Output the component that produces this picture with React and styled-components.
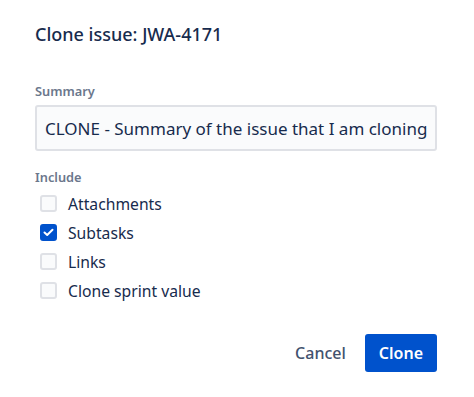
import React, { useState } from "react";
import styled, { createGlobalStyle } from "styled-components";

const GlobalStyle = createGlobalStyle`
  html, body {
    margin: 0;
    padding: 0;
    background: #ffffff;
  }
  body {
    font-family: "Noto Sans", "Open Sans", sans-serif;
    color: #172b4d;
  }
`;

const Dialog = styled.div`
  width: 474px;
  height: 397px;
  box-sizing: border-box;
  padding: 16px 37px 0 35px;
  display: flex;
  flex-direction: column;
`;

const Title = styled.h1`
  margin: 0;
  height: 36px;
  line-height: 36px;
  font-size: 18px;
  font-weight: 500;
  color: #172b4d;
`;

const Field = styled.div`
  display: flex;
  flex-direction: column;
  margin-top: ${(p) => p.$top}px;
`;

const Label = styled.label`
  font-size: 12.8px;
  font-weight: 600;
  color: #6b778c;
  line-height: 16px;
  margin-bottom: ${(p) => p.$gap}px;
`;

const TextInput = styled.input`
  box-sizing: border-box;
  width: 402px;
  height: 46px;
  padding: 0 8px;
  border: 2px solid #dfe1e6;
  border-radius: 3px;
  background: #fafbfc;
  font-family: inherit;
  font-size: 17px;
  color: #172b4d;
  outline: none;
`;

const CheckList = styled.div`
  display: flex;
  flex-direction: column;
  padding-left: 5px;
`;

const CheckRow = styled.label`
  display: flex;
  align-items: center;
  gap: 11px;
  height: 29px;
  font-size: 15.7px;
  color: #172b4d;
  cursor: pointer;
`;

const Box = styled.span`
  box-sizing: border-box;
  width: 17px;
  height: 17px;
  border-radius: 3px;
  border: 2px solid ${(p) => (p.$checked ? "#0052cc" : "#dfe1e6")};
  background: ${(p) => (p.$checked ? "#0052cc" : "#fafbfc")};
  display: flex;
  align-items: center;
  justify-content: center;
`;

const Footer = styled.div`
  display: flex;
  justify-content: flex-end;
  align-items: center;
  gap: 5px;
  margin-top: 29px;
`;

const Button = styled.button`
  height: 38px;
  padding: 0 14px;
  border: none;
  border-radius: 3px;
  font-family: inherit;
  font-size: 16px;
  font-weight: ${(p) => (p.$primary ? 600 : 500)};
  color: ${(p) => (p.$primary ? "#ffffff" : "#42526e")};
  background: ${(p) => (p.$primary ? "#0052cc" : "transparent")};
  cursor: pointer;
`;

const options = ["Attachments", "Subtasks", "Links", "Clone sprint value"];

const App = () => {
  const [checked, setChecked] = useState({ Subtasks: true });
  const [summary, setSummary] = useState(
    "CLONE - Summary of the issue that I am cloning"
  );

  return (
    <>
      <GlobalStyle />
      <Dialog>
        <Title>Clone issue: JWA-4171</Title>
        <Field $top={31}>
          <Label $gap={6}>Summary</Label>
          <TextInput
            value={summary}
            onChange={(e) => setSummary(e.target.value)}
          />
        </Field>
        <Field $top={18}>
          <Label $gap={4}>Include</Label>
          <CheckList>
            {options.map((opt) => (
              <CheckRow
                key={opt}
                onClick={() => setChecked({ ...checked, [opt]: !checked[opt] })}
              >
                <Box $checked={!!checked[opt]}>
                  {checked[opt] && (
                    <svg width="11" height="9" viewBox="0 0 11 9">
                      <path
                        d="M1.5 4.5 L4.2 7 L9.5 1.8"
                        fill="none"
                        stroke="#fff"
                        strokeWidth="2"
                        strokeLinecap="round"
                        strokeLinejoin="round"
                      />
                    </svg>
                  )}
                </Box>
                {opt}
              </CheckRow>
            ))}
          </CheckList>
        </Field>
        <Footer>
          <Button>Cancel</Button>
          <Button $primary>Clone</Button>
        </Footer>
      </Dialog>
    </>
  );
};

export default App;
